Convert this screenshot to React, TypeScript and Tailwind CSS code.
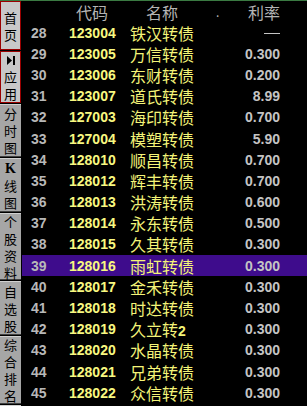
import React from 'react'

/* ── data ────────────────────────────────────────────────────── */
const ROWS: [number, string, string, string][] = [
  [28, '123004', '铁汉转债', '—'],
  [29, '123005', '万信转债', '0.300'],
  [30, '123006', '东财转债', '0.200'],
  [31, '123007', '道氏转债', '8.99'],
  [32, '127003', '海印转债', '0.700'],
  [33, '127004', '模塑转债', '5.90'],
  [34, '128010', '顺昌转债', '0.700'],
  [35, '128012', '辉丰转债', '0.700'],
  [36, '128013', '洪涛转债', '0.600'],
  [37, '128014', '永东转债', '0.500'],
  [38, '128015', '久其转债', '0.300'],
  [39, '128016', '雨虹转债', '0.300'],
  [40, '128017', '金禾转债', '0.300'],
  [41, '128018', '时达转债', '0.300'],
  [42, '128019', '久立转2', '0.300'],
  [43, '128020', '水晶转债', '0.300'],
  [44, '128021', '兄弟转债', '0.300'],
  [45, '128022', '众信转债', '0.300'],
]

const SIDE: { chars: string[]; h: string; active?: boolean; icon?: boolean }[] = [
  { chars: ['首', '页'], h: 'h-[49px]', active: true },
  { chars: ['应', '用'], h: 'h-[52px]', active: true, icon: true },
  { chars: ['分', '时', '图'], h: 'h-[53px]' },
  { chars: ['K', '线', '图'], h: 'h-[54px]' },
  { chars: ['个', '股', '资', '料'], h: 'h-[67px]' },
  { chars: ['自', '选', '股'], h: 'h-[54px]' },
  { chars: ['综', '合', '排', '名'], h: 'h-[68px]' },
]

const cjk = "font-['Noto_Sans_CJK_SC','Noto_Sans',sans-serif]"
const num = "font-['Liberation_Sans',Arial,sans-serif] font-bold"

const NextIcon = () => (
  <svg width="8" height="9" viewBox="0 0 8 9" fill="#000">
    <polygon points="0,0 5,4.5 0,9" />
    <rect x="6" y="0" width="2" height="9" />
  </svg>
)

export default function App() {
  return (
    <div className="w-[307px] h-[406px] bg-black overflow-hidden flex flex-col">
      {/* top line */}
      <div className="h-px bg-[#3a7a42] shrink-0" />

      <div className="flex flex-1 min-h-0">
        {/* ── sidebar ── */}
        <div className="w-[21px] shrink-0 flex flex-col gap-px bg-black">
          {SIDE.map((b, i) => (
            <div
              key={i}
              className={`${b.h} shrink-0 flex flex-col items-center justify-center ${cjk} text-[13px] leading-[17px] text-black ${
                b.active
                  ? 'bg-[#c8c8c8] border border-[#9a0000]'
                  : 'bg-[#a6a6a6] border-t border-t-[#d0d0d0] border-b border-b-[#404040]'
              }`}
            >
              {b.icon && (
                <div className="h-[15px] flex items-center">
                  <NextIcon />
                </div>
              )}
              {b.chars.map((c, j) => (
                <span
                  key={j}
                  className={`h-[17px] leading-[17px] ${c === 'K' ? "font-['Liberation_Serif',serif] font-bold text-[14px]" : ''}`}
                >
                  {c}
                </span>
              ))}
            </div>
          ))}
          <div className="flex-1 bg-[#a6a6a6] border-t border-t-[#d0d0d0]" />
        </div>

        {/* ── table ── */}
        <div className="flex-1 ml-px flex flex-col">
          {/* header */}
          <div className={`h-[21px] shrink-0 flex items-center ${cjk} text-[16px] leading-[20px] text-[#b4b4b4]`}>
            <div className="w-[47px]" />
            <div className="w-[61px] pl-[7px]">代码</div>
            <div className="w-[96px] pl-[16px] flex">
              <span>名称</span>
              <span className="ml-[38px] text-[12px]">.</span>
            </div>
            <div className="w-[54px] text-right">利率</div>
          </div>

          {ROWS.map(([n, code, name, rate]) => (
            <div
              key={n}
              className={`h-[21.2px] shrink-0 flex items-center ${n === 39 ? 'bg-[#3e0c8c]' : ''}`}
            >
              <div className={`w-[47px] pl-[9px] ${num} text-[14px] leading-[18px] text-[#b8b8b8]`}>{n}</div>
              <div className={`w-[61px] ${num} text-[14px] leading-[18px] text-[#f8f880]`}>{code}</div>
              <div className={`w-[96px] ${cjk} text-[16px] leading-[20px] text-[#f4f478]`}>
                {name.endsWith('2') ? (
                  <>
                    {name.slice(0, -1)}
                    <span className={`${num} text-[14px] leading-[18px]`}>2</span>
                  </>
                ) : (
                  name
                )}
              </div>
              <div className={`w-[54px] text-right ${num} text-[14px] leading-[18px] text-[#c4c4c4]`}>
                {rate === '—' ? <span className="inline-block w-[16px] h-px bg-[#c4c4c4] align-middle" /> : rate}
              </div>
            </div>
          ))}
        </div>
      </div>
    </div>
  )
}
